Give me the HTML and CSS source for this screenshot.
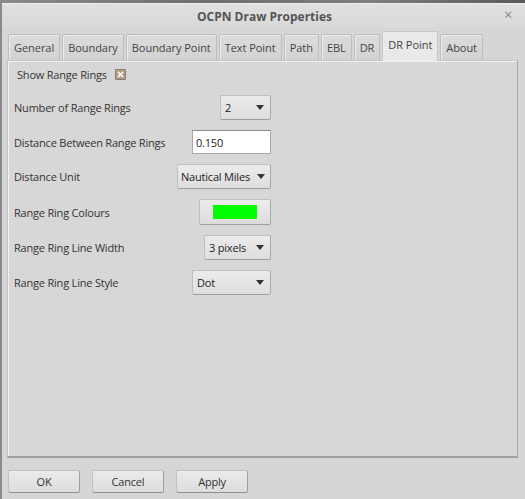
FILE: index.html
```html
<!DOCTYPE html>
<html>
<head>
<meta charset="utf-8">
<link rel="stylesheet" href="styles.css">
</head>
<body>
<div class="topstrip"></div>
<div class="dialog">
  <div class="titlebar">
    <span class="title">OCPN Draw Properties</span>
    <span class="close">×</span>
  </div>
  <div class="tabs">
    <div class="tab">General</div>
    <div class="tab">Boundary</div>
    <div class="tab">Boundary Point</div>
    <div class="tab">Text Point</div>
    <div class="tab">Path</div>
    <div class="tab">EBL</div>
    <div class="tab">DR</div>
    <div class="tab active">DR Point</div>
    <div class="tab">About</div>
  </div>
  <div class="panel">
    <div class="showrings">
      <span>Show Range Rings</span>
      <span class="check"><svg width="9" height="9" viewBox="0 0 9 9"><path d="M2 2 L7 7 M7 2 L2 7" stroke="#fff" stroke-width="1.6"/></svg></span>
    </div>
    <div class="form">
      <div class="label">Number of Range Rings</div>
      <div class="combo w-num"><span>2</span><span class="arrow"></span></div>

      <div class="label">Distance Between Range Rings</div>
      <div class="textbox">0.150</div>

      <div class="label">Distance Unit</div>
      <div class="combo w-unit"><span>Nautical Miles</span><span class="arrow"></span></div>

      <div class="label">Range Ring Colours</div>
      <div class="colorbtn"><span class="swatch"></span></div>

      <div class="label">Range Ring Line Width</div>
      <div class="combo w-width"><span>3 pixels</span><span class="arrow"></span></div>

      <div class="label">Range Ring Line Style</div>
      <div class="combo w-style"><span>Dot</span><span class="arrow"></span></div>
    </div>
  </div>
  <div class="buttons">
    <div class="btn">OK</div>
    <div class="btn">Cancel</div>
    <div class="btn">Apply</div>
  </div>
</div>
</body>
</html>
```
FILE: styles.css
```css
html, body {
  margin: 0;
  padding: 0;
}
body {
  width: 525px;
  height: 499px;
  overflow: hidden;
  background: #d6d6d6;
  font-family: "Open Sans", "Noto Sans", sans-serif;
  font-size: 11px;
  letter-spacing: -0.2px;
  color: #333;
  border-left: 2px solid #8a8a8a;
  box-sizing: border-box;
}
.topstrip {
  height: 3px;
  background: linear-gradient(90deg, #8a8a8a, #6e6e6e 40%, #7e7e7e 70%, #5a5a5a);
}
.dialog {
  display: flex;
  flex-direction: column;
  height: 496px;
  background: #d6d6d6;
}
.titlebar {
  height: 25px;
  position: relative;
  display: flex;
  align-items: center;
  justify-content: center;
  background: linear-gradient(#e0e0e0, #d9d9d9);
  border-top: 1px solid #efefef;
  box-sizing: border-box;
}
.title {
  font-weight: bold;
  font-size: 12px;
  letter-spacing: 0;
  color: #555;
  margin-left: 2px;
}
.close {
  position: absolute;
  right: 13px;
  top: 1px;
  font-size: 14px;
  color: #888;
}
.tabs {
  display: flex;
  align-items: flex-end;
  gap: 2px;
  padding-left: 6px;
  height: 32px;
  box-sizing: border-box;
}
.tab {
  height: 26px;
  box-sizing: border-box;
  border: 1px solid #bdbdbd;
  border-bottom: none;
  background: linear-gradient(#dcdcdc, #d2d2d2);
  padding: 0 5px;
  letter-spacing: -0.05px;
  display: flex;
  align-items: center;
  color: #444;
  border-radius: 2px 2px 0 0;
  box-shadow: inset 1px 1px 0 #ececec;
  white-space: nowrap;
}
.tab.active {
  height: 30px;
  background: #e9e9e9;
  padding-bottom: 5px;
  position: relative;
  top: 1px;
  z-index: 2;
  border-color: #c8c8c8;
}
.panel {
  margin: 0 7px 0 5px;
  height: 398px;
  border: 1px solid #c4c4c4;
  border-right-color: #a8a8a8;
  border-bottom: 2px solid #a0a0a0;
  box-shadow: inset 1px 1px 0 #f2f2f2;
  background: #d7d7d7;
  padding: 6px 0 0 6px;
  box-sizing: border-box;
}
.showrings {
  display: flex;
  align-items: center;
  gap: 8px;
  padding-left: 3px;
  height: 14px;
}
.check {
  width: 11px;
  height: 11px;
  box-sizing: border-box;
  background: #b49f8a;
  border: 1px solid #8a7a6a;
  display: flex;
  align-items: center;
  justify-content: center;
  border-radius: 1px;
}
.check svg { display: block; }
.form {
  margin-top: 14px;
  width: 257px;
  display: grid;
  grid-template-columns: 1fr auto;
  row-gap: 10px;
  align-items: center;
}
.label { color: #333; white-space: nowrap; }
.combo, .textbox, .colorbtn {
  height: 25px;
  box-sizing: border-box;
  justify-self: end;
  display: flex;
  align-items: center;
  white-space: nowrap;
}
.combo {
  border: 1px solid #c0c0c0;
  border-bottom-color: #9e9e9e;
  border-right-color: #a8a8a8;
  background: linear-gradient(#ebebeb, #dedede);
  padding: 0 6px 0 4px;
  justify-content: space-between;
  border-radius: 2px;
  color: #222;
}
.arrow {
  flex: none;
  width: 0;
  height: 0;
  border-left: 4px solid transparent;
  border-right: 4px solid transparent;
  border-top: 5px solid #333;
  margin-left: 5px;
}
.w-num { width: 51px; }
.w-unit { width: 94px; padding-left: 3px; padding-right: 5px; }
.w-width { width: 67px; }
.w-style { width: 79px; }
.textbox {
  width: 79px;
  height: 24px;
  background: #fff;
  border: 1px solid #a8a8a8;
  border-top-color: #8e8e8e;
  padding-left: 3px;
  color: #222;
}
.colorbtn {
  width: 72px;
  height: 26px;
  border: 1px solid #c0c0c0;
  border-bottom-color: #9e9e9e;
  border-right-color: #a8a8a8;
  background: linear-gradient(#ececec, #dcdcdc);
  justify-content: center;
  border-radius: 2px;
}
.swatch {
  width: 44px;
  height: 14px;
  background: #00ff00;
}
.buttons {
  display: flex;
  gap: 12px;
  padding: 12px 0 0 6px;
}
.btn {
  width: 72px;
  height: 23px;
  box-sizing: border-box;
  border: 1px solid #c2c2c2;
  border-bottom-color: #8e8e8e;
  border-right-color: #a0a0a0;
  background: linear-gradient(#ebebeb, #dcdcdc);
  display: flex;
  align-items: center;
  justify-content: center;
  color: #333;
  border-radius: 2px;
}
```
